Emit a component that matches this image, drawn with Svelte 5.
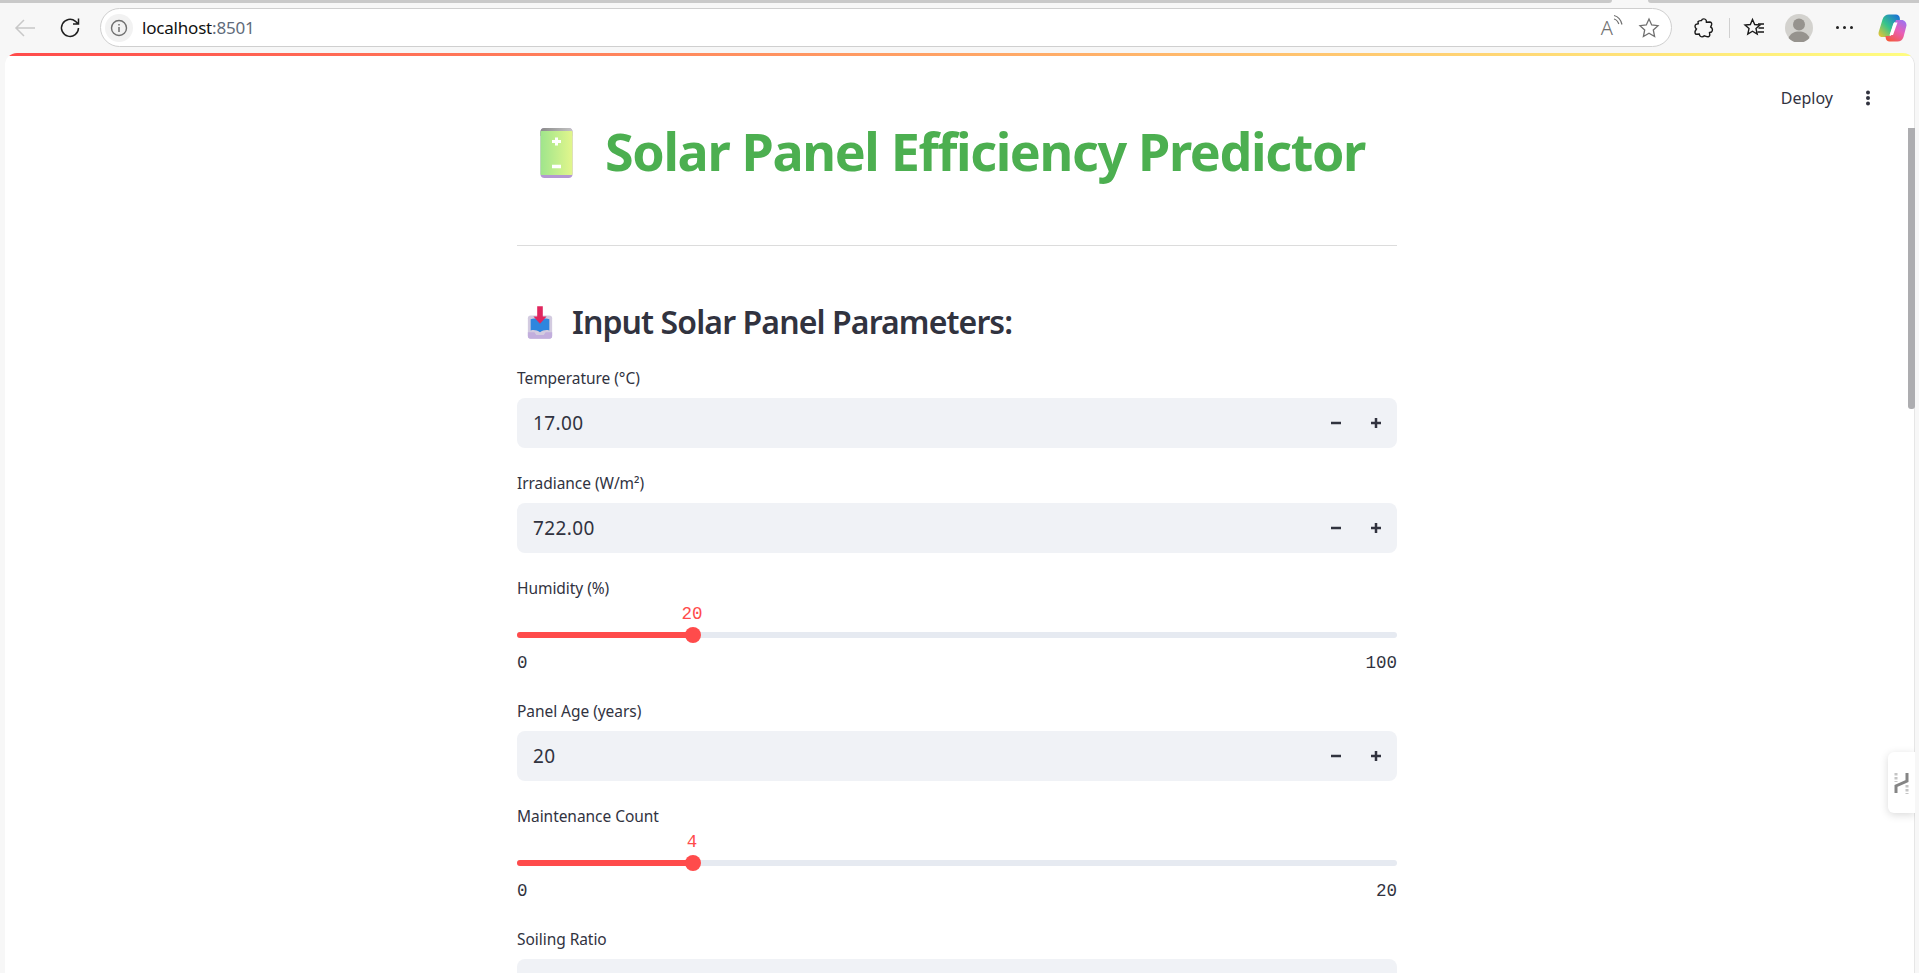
<div class="window">
  <header class="browser">
    <div class="tabstrip"><span class="tab-main"></span><span class="tab-rest"></span></div>
    <div class="toolbar">
      <svg class="back" width="24" height="24" viewBox="0 0 24 24"><path d="M22 12H3M11 4l-8 8 8 8" fill="none" stroke="#c8c8c8" stroke-width="1.5"/></svg>
      <svg class="reload" width="24" height="24" viewBox="0 0 24 24"><path d="M20.500 12a8.500 8.500 0 1 1-3-6.600L20.500 8M20.500 2.500V8h-5.500" fill="none" stroke="#1f1f1f" stroke-width="1.500"/></svg>
      <div class="omnibox">
        <span class="info"><svg width="18" height="18" viewBox="0 0 18 18"><circle cx="9" cy="9" r="7.500" fill="none" stroke="#707070" stroke-width="1.400"/><path d="M9 8v5M9 5v1.600" stroke="#707070" stroke-width="1.500"/></svg></span>
        <span class="url">localhost<span class="port">:8501</span></span>
        <span class="spacer"></span>
        <span class="read">A<svg width="11" height="14" viewBox="0 0 11 14"><path d="M1 1.500c4 1 7 4.500 8 9M1 5c2.500 .7 4 2.500 4.800 5" fill="none" stroke="#707070" stroke-width="1.200"/></svg></span>
        <svg class="star" width="22" height="22" viewBox="0 0 22 22"><path d="M11 2l2.700 6 6.300 .7-4.700 4.300 1.300 6.500L11 16.200 5.400 19.500 6.700 13 2 8.700 8.300 8z" fill="none" stroke="#707070" stroke-width="1.300"/></svg>
      </div>
      <div class="tools">
        <svg width="22" height="22" viewBox="0 0 22 22"><path d="M8.500 3.500c.6-2.200 4.300-2.200 4.800 .2l.1 1.600 3.300-.3c1.600 0 2.300 1.300 1.900 2.800l-.9 2.200c2 1 2.300 3.700 .8 5l-2 .6.300 2.500c-.3 1.500-1.500 1.800-3 1.500l-2.500-.8c-1.500 1.500-3.500 1.300-4.500-.2l-.5-1.500-2.800 .2C2 17.300 1.500 15 2.500 13.500l1-1.500C1.800 10.800 1.500 8.500 3 7.300l2.300-.5-.3-2c.8-1 2.300-1 3.500-1.300z" fill="none" stroke="#1a1a1a" stroke-width="1.400"/></svg>
        <span class="divider"></span>
        <svg width="24" height="22" viewBox="0 0 24 22"><path d="M9.500 2.500l2.200 5 5.300 .5-4 3.600 1.200 5.400-4.700-2.800-4.700 2.800L6 11.600 2 8l5.300-.5z" fill="none" stroke="#1a1a1a" stroke-width="1.400"/><path d="M15 7h6M15.500 11h5.500M14.500 15h6.500" stroke="#1a1a1a" stroke-width="1.300"/></svg>
        <span class="avatar"><svg width="28" height="28" viewBox="0 0 28 28"><circle cx="14" cy="14" r="14" fill="#d3d2ce"/><circle cx="14" cy="10.500" r="6" fill="#96938e"/><path d="M3.500 24c2-5 6-6.500 10.500-6.500S22.500 19 24.500 24A14 14 0 0 1 3.500 24z" fill="#96938e"/></svg></span>
        <span class="dots"><i></i><i></i><i></i></span>
        <svg class="copilot" width="29" height="28" viewBox="0 0 29 28"><defs><linearGradient id="cpa" x1="0" y1="1" x2="1" y2="0"><stop offset="0" stop-color="#f7c52e"/><stop offset=".45" stop-color="#37c58a"/><stop offset="1" stop-color="#1668e0"/></linearGradient><linearGradient id="cpb" x1=".2" y1="1" x2=".8" y2="0"><stop offset="0" stop-color="#f4583c"/><stop offset=".55" stop-color="#e85fb8"/><stop offset="1" stop-color="#9f72ee"/></linearGradient></defs><path d="M11 .500h7c2 0 3.500 1.200 3.800 3.500L22 8h-4c-1.500 0-2.500 1-3 2.500L12 21c-.5 1.500-1.500 2-3 2H4c-2.500 0-4-2.300-3.300-5L4.500 5.500C5.500 2 8 .500 11 .500z" fill="url(#cpa)"/><path d="M18 6h5.500c3 0 5.200 2.500 5 5.500L25.500 23c-1 3-3.200 4.500-6 4.500h-8c-2.200 0-3.400-1.500-3.800-3.500L7.500 22H11c1.500 0 2.700-.8 3.200-2.300L17 9c.2-1 .5-2 1-3z" fill="url(#cpb)"/><path d="M16 8.500h3.500L15 21h-3.500z" fill="#fff"/></svg>
      </div>
    </div>
  </header>

  <div class="viewport">
    <div class="gradient"></div>
    <div class="content">
      <div class="page">
        <div class="topbar">
          <span class="deploy">Deploy</span>
          <svg width="4" height="16" viewBox="0 0 4 16"><circle cx="2" cy="2.500" r="2" fill="#31333f"/><circle cx="2" cy="8" r="2" fill="#31333f"/><circle cx="2" cy="13.500" r="2" fill="#31333f"/></svg>
        </div>
        <main class="column">
          <h1>
            <svg width="33" height="52" viewBox="0 0 33 52"><defs><linearGradient id="batt" x1="0" x2="1"><stop offset="0" stop-color="#9fe58c"/><stop offset="1" stop-color="#e2f68c"/></linearGradient><linearGradient id="cap" x1="0" x2="1"><stop offset="0" stop-color="#8a8a8a"/><stop offset="1" stop-color="#c4c4c4"/></linearGradient></defs><rect x=".5" y="1" width="32" height="50" rx="4" fill="#b498d2"/><path d="M.5 5a4 4 0 0 1 4-4h24a4 4 0 0 1 4 4v4H.5z" fill="url(#cap)"/><rect x=".5" y="4" width="32" height="44" rx="1" fill="url(#batt)"/><path d="M12 14.500h9M16.500 10.500v8" stroke="#fff" stroke-width="3"/><path d="M12 39.500h9" stroke="#fff" stroke-width="3.500"/></svg>
            <span>Solar Panel Efficiency Predictor</span>
          </h1>
          <hr />
          <h2>
            <svg width="28" height="34" viewBox="0 0 30 36"><path d="M2 14a3 3 0 0 1 3-3h20a3 3 0 0 1 3 3v19a3 3 0 0 1-3 3H5a3 3 0 0 1-3-3z" fill="#d3cbe0"/><path d="M2 29h7l2 3h8l2-3h7v4a3 3 0 0 1-3 3H5a3 3 0 0 1-3-3z" fill="#c2aedd"/><path d="M5 15c3-1 7-1 10 1 3-2 7-2 10-1v12c-3-1-7-.500-10 2-3-2.500-7-3-10-2z" fill="#2e86de"/><path d="M12 1h6v11h4l-7 8-7-8h4z" fill="#e0265e"/></svg>
            <span>Input Solar Panel Parameters:</span>
          </h2>

          {#each fields as f}
            <section class="field" class:slider={f.type === 'slider'}>
              <label>{f.label}</label>
              {#if f.type === 'number'}
                <div class="number">
                  <span class="value">{f.value}</span>
                  <span class="step"><svg width="10" height="10" viewBox="0 0 10 10"><path d="M0 5h10" stroke="#31333f" stroke-width="2.500"/></svg></span>
                  <span class="step"><svg width="10" height="10" viewBox="0 0 10 10"><path d="M0 5h10M5 0v10" stroke="#31333f" stroke-width="2.500"/></svg></span>
                </div>
              {:else if f.type === 'slider'}
                <div class="range">
                  <div class="current"><span>{f.value}</span></div>
                  <div class="track"><div class="fill"><span class="thumb"></span></div></div>
                  <div class="ends"><span>{f.min}</span><span>{f.max}</span></div>
                </div>
              {:else}
                <div class="number"></div>
              {/if}
            </section>
          {/each}
        </main>
      </div>
      <div class="scrollbar"><div class="thumbbar"></div></div>
    </div>
    <div class="sidetab">
      <svg width="15" height="22" viewBox="0 0 15 22"><path d="M2 21v-7l11-5V1" fill="none" stroke="#858585" stroke-width="3"/><path d="M2 1v9M13 13v9" stroke="#c4c4c4" stroke-width="3" stroke-dasharray="2.500 1.500"/></svg>
    </div>
  </div>
</div>

<script>
  const fields = [
    { label: 'Temperature (°C)', type: 'number', value: '17.00' },
    { label: 'Irradiance (W/m²)', type: 'number', value: '722.00' },
    { label: 'Humidity (%)', type: 'slider', value: 20, min: 0, max: 100 },
    { label: 'Panel Age (years)', type: 'number', value: '20' },
    { label: 'Maintenance Count', type: 'slider', value: 4, min: 0, max: 20 },
    { label: 'Soiling Ratio', type: 'empty' }
  ];
</script>

<style>
  :global(body) { margin: 0; overflow: hidden; background: #f7f7f7; font-family: "Noto Sans", sans-serif; }
  .window { height: 973px; display: flex; flex-direction: column; overflow: hidden; }
  .browser { flex: none; height: 53px; background: #f7f7f7; }
  .tabstrip { height: 3px; display: flex; gap: 36px; }
  .tab-main { width: 1612px; background: #c9c9c9; border-radius: 0 0 6px 0; }
  .tab-rest { flex: 1; background: #c9c9c9; border-radius: 0 0 0 6px; }
  .toolbar { display: flex; align-items: center; height: 39px; margin-top: 5px; padding: 0 0 0 13px; }
  .back { margin-right: 21px; }
  .reload { margin-right: 18px; }
  .omnibox { flex: none; width: 1572px; height: 39px; box-sizing: border-box; border: 1px solid #cfcfcf; border-radius: 20px; background: #fff; display: flex; align-items: center; padding: 0 11px 0 4px; }
  .info { width: 28px; height: 28px; border-radius: 50%; background: #f2f2f2; display: flex; align-items: center; justify-content: center; margin-right: 9px; }
  .url { font-size: 17px; color: #111; letter-spacing: -.2px; }
  .port { color: #5f6b7a; }
  .spacer { flex: 1; }
  .read { font-size: 20px; color: #707070; display: flex; align-items: flex-start; margin-right: 14px; font-weight: 300; }
  .tools { flex: 1; display: flex; align-items: center; padding-left: 21px; }
  .divider { width: 1px; height: 20px; background: #d0d0d0; margin: 0 13px 0 14px; }
  .avatar { display: flex; margin: 0 23px 0 18px; }
  .dots { display: flex; gap: 4px; margin-right: 25px; }
  .dots i { width: 3px; height: 3px; border-radius: 50%; background: #222; }
  .viewport { flex: 1; min-height: 0; display: flex; flex-direction: column; margin: 0 4px 0 5px; background: #fff; border-radius: 12px 12px 0 0; position: relative; overflow: hidden; box-shadow: inset -1px 0 0 #e6e6e6; }
  .gradient { flex: none; height: 3px; background: linear-gradient(90deg, #ff4b4b, #fffd80); }
  .content { flex: 1; min-height: 0; display: flex; }
  .page { flex: 1; min-width: 0; position: relative; overflow: hidden; }
  .topbar { position: absolute; top: 0; right: 0; height: 48px; display: flex; align-items: center; gap: 33px; padding-right: 38px; padding-top: 18px; color: #31333f; font-size: 16px; }
  .column { width: 880px; margin: 0 0 0 512px; color: #31333f; }
  h1 { margin: 0; padding-top: 69px; height: 51px; display: flex; align-items: center; font-size: 52px; font-weight: 700; color: #4caf50; letter-spacing: -1.35px; white-space: nowrap; }
  h1 svg { margin: 4px 32px 0 23px; flex: none; }
  hr { border: 0; height: 1px; background: #dcdcdc; margin: 69px 0 0; }
  h2 { margin: 0; padding: 57px 0 21px; height: 37px; display: flex; align-items: center; font-size: 32px; font-weight: 600; letter-spacing: -.9px; white-space: nowrap; }
  h2 svg { margin: 0 18px 0 9px; flex: none; }
  .field { height: 105px; }
  .field.slider { height: 123px; }
  label { display: block; padding-top: 7px; font-size: 15.500px; line-height: 20px; letter-spacing: -.05px; height: 20px; margin-bottom: 10px; }
  .number { height: 50px; border-radius: 8px; background: #f0f2f6; display: flex; align-items: center; padding: 0 1px 0 16px; font-size: 19px; letter-spacing: .4px; }
  .value { flex: 1; }
  .step { width: 40px; display: flex; justify-content: center; }
  .range { font-family: "Liberation Mono", monospace; font-size: 17.500px; }
  .current { position: relative; height: 20px; margin-top: -4px; color: #ff4b4b; }
  .current span { position: absolute; left: 125px; width: 100px; text-align: center; line-height: 20px; }
  .track { height: 6px; border-radius: 3px; background: #e6eaf1; margin-top: 8px; }
  .fill { width: 176px; height: 6px; border-radius: 3px; background: #ff4b4b; position: relative; }
  .thumb { position: absolute; right: -8px; top: -5px; width: 16px; height: 16px; border-radius: 50%; background: #ff4b4b; }
  .ends { display: flex; justify-content: space-between; margin-top: 15px; color: #31333f; }
  .sidetab { position: absolute; right: 0; top: 699px; width: 27px; height: 61px; background: #fff; border-radius: 6px 0 0 6px; box-shadow: 0 2px 8px rgba(0,0,0,.15); display: flex; align-items: center; justify-content: center; }
  .scrollbar { flex: none; width: 7px; position: relative; }
  .thumbbar { position: absolute; left: 0; top: 72px; width: 7px; height: 281px; background: #adadb0; border-radius: 0 0 3px 3px; }
</style>
